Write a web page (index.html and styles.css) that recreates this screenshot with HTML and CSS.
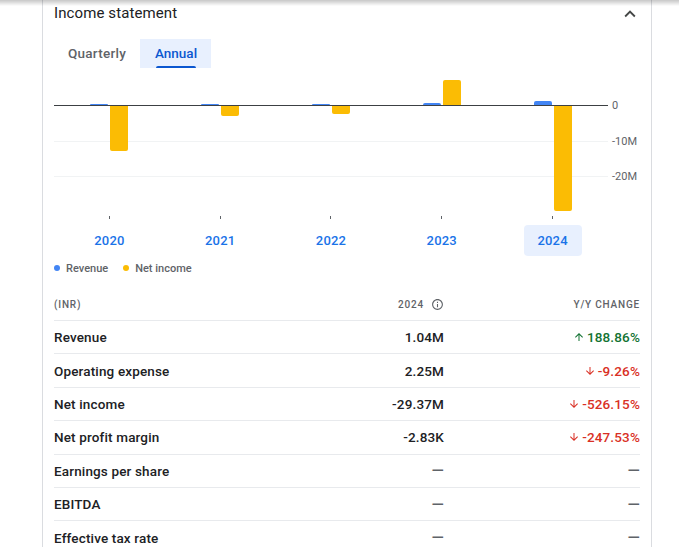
FILE: index.html
```html
<!DOCTYPE html>
<html>
<head>
<meta charset="utf-8">
<link rel="stylesheet" href="styles.css">
</head>
<body>
<div class="topshade"></div>
<section class="card">
  <header class="card-head">
    <h2 class="title">Income statement</h2>
    <svg class="chev" width="22" height="22" viewBox="0 0 24 24"><path d="M12 8l-6 6 1.41 1.41L12 10.83l4.59 4.58L18 14z" fill="#444746"/></svg>
  </header>
  <div class="tabs">
    <div class="tab">Quarterly</div>
    <div class="tab active">Annual</div>
  </div>
  <div class="chart">
    <div class="plot">
      <div class="grid-line" style="top:71px"></div>
      <div class="grid-line" style="top:106px"></div>
      <div class="zero-line" style="top:35px"></div>
      <div class="groups">
        <div class="group">
          <div class="bar rev pos" style="top:34px;height:1px"></div>
          <div class="bar ni neg" style="top:36px;height:45px"></div>
        </div>
        <div class="group">
          <div class="bar rev pos" style="top:34px;height:1px"></div>
          <div class="bar ni neg" style="top:36px;height:10px"></div>
        </div>
        <div class="group">
          <div class="bar rev pos" style="top:34px;height:1px"></div>
          <div class="bar ni neg" style="top:36px;height:8px"></div>
        </div>
        <div class="group">
          <div class="bar rev pos" style="top:33px;height:2px"></div>
          <div class="bar ni pos" style="top:10px;height:25px"></div>
        </div>
        <div class="group">
          <div class="bar rev pos" style="top:31px;height:4px"></div>
          <div class="bar ni neg" style="top:36px;height:105px"></div>
        </div>
      </div>
    </div>
    <div class="axis">
      <span class="axis-label" style="top:35px">0</span>
      <span class="axis-label" style="top:71px">-10M</span>
      <span class="axis-label" style="top:106px">-20M</span>
    </div>
  </div>
  <div class="ticks">
    <div class="tick"></div><div class="tick"></div><div class="tick"></div><div class="tick"></div><div class="tick"></div>
  </div>
  <div class="years">
    <div class="year"><span>2020</span></div>
    <div class="year"><span>2021</span></div>
    <div class="year"><span>2022</span></div>
    <div class="year"><span>2023</span></div>
    <div class="year"><span class="sel">2024</span></div>
  </div>
  <div class="legend">
    <span class="dot blue"></span><span class="legend-text">Revenue</span>
    <span class="dot yellow"></span><span class="legend-text">Net income</span>
  </div>
  <div class="table">
    <div class="row head">
      <div>(INR)</div>
      <div class="num">2024 <svg class="info" width="13" height="13" viewBox="0 0 24 24"><path d="M11 7h2v2h-2zm0 4h2v6h-2zm1-9C6.48 2 2 6.48 2 12s4.48 10 10 10 10-4.48 10-10S17.52 2 12 2zm0 18c-4.41 0-8-3.590-8-8s3.59-8 8-8 8 3.59 8 8-3.59 8-8 8z" fill="#5f6368"/></svg></div>
      <div class="num">Y/Y CHANGE</div>
    </div>
    <div class="row">
      <div>Revenue</div>
      <div class="num">1.04M</div>
      <div class="num up"><svg class="arr" width="12" height="12" viewBox="0 0 24 24"><path d="M4 12l1.41 1.41L11 7.83V20h2V7.83l5.58 5.59L20 12l-8-8-8 8z" fill="currentColor"/></svg>188.86%</div>
    </div>
    <div class="row">
      <div>Operating expense</div>
      <div class="num">2.25M</div>
      <div class="num down"><svg class="arr" width="12" height="12" viewBox="0 0 24 24"><path d="M20 12l-1.41-1.41L13 16.17V4h-2v12.17l-5.58-5.59L4 12l8 8 8-8z" fill="currentColor"/></svg>-9.26%</div>
    </div>
    <div class="row">
      <div>Net income</div>
      <div class="num">-29.37M</div>
      <div class="num down"><svg class="arr" width="12" height="12" viewBox="0 0 24 24"><path d="M20 12l-1.41-1.41L13 16.17V4h-2v12.17l-5.58-5.59L4 12l8 8 8-8z" fill="currentColor"/></svg>-526.15%</div>
    </div>
    <div class="row">
      <div>Net profit margin</div>
      <div class="num">-2.83K</div>
      <div class="num down"><svg class="arr" width="12" height="12" viewBox="0 0 24 24"><path d="M20 12l-1.41-1.41L13 16.17V4h-2v12.17l-5.58-5.59L4 12l8 8 8-8z" fill="currentColor"/></svg>-247.53%</div>
    </div>
    <div class="row">
      <div>Earnings per share</div>
      <div class="num dash">—</div>
      <div class="num dash">—</div>
    </div>
    <div class="row">
      <div>EBITDA</div>
      <div class="num dash">—</div>
      <div class="num dash">—</div>
    </div>
    <div class="row">
      <div>Effective tax rate</div>
      <div class="num dash">—</div>
      <div class="num dash">—</div>
    </div>
  </div>
</section>
</body>
</html>
```

FILE: styles.css
```css
* { box-sizing: border-box; }
html, body { margin: 0; padding: 0; background: #fff; }
body {
  font-family: Roboto, "Liberation Sans", sans-serif;
  color: #202124;
  overflow: hidden;
}
.topshade {
  position: fixed;
  top: 0; left: 0; right: 0;
  height: 6px;
  background: linear-gradient(to bottom, rgba(0,0,0,0.22), rgba(0,0,0,0));
  z-index: 5;
}
.card {
  margin-left: 42px;
  width: 610px;
  border-left: 1px solid #dadce0;
  border-right: 1px solid #dadce0;
  padding: 0 11px;
  min-height: 600px;
}
.card-head {
  display: flex;
  justify-content: space-between;
  align-items: center;
  height: 25px;
  padding-top: 1px;
}
.title {
  margin: 0;
  font-size: 15px;
  font-weight: 400;
  line-height: 24px;
  letter-spacing: 0.1px;
  color: #202124;
}
.chev { margin-right: -1px; margin-top: 1px; }
.tabs {
  display: flex;
  margin-top: 14px;
  height: 29px;
}
.tab {
  padding: 0 14px;
  height: 29px;
  line-height: 29px;
  font-size: 13.5px;
  font-weight: 500;
  letter-spacing: 0.25px;
  color: #5f6368;
  position: relative;
}
.tab.active {
  background: #e8f0fe;
  color: #0b57d0;
  padding: 0 14px 0 15px;
  letter-spacing: 0;
}
.tab.active::after {
  content: "";
  position: absolute;
  left: 16px; right: 15px; bottom: 0;
  height: 2.5px;
  border-radius: 2px 2px 0 0;
  background: #0b57d0;
}
.chart {
  display: flex;
  margin-top: 2px;
}
.plot {
  position: relative;
  width: 554px;
  height: 146px;
}
.grid-line {
  position: absolute;
  left: 0; right: 0;
  height: 1px;
  background: #f1f3f4;
}
.zero-line {
  position: absolute;
  left: 0; right: 0;
  height: 1px;
  background: #3c4043;
  z-index: 2;
}
.groups {
  position: absolute;
  inset: 0;
  display: grid;
  grid-template-columns: repeat(5, 1fr);
}
.group { position: relative; }
.bar {
  position: absolute;
  width: 18px;
}
.bar.rev { left: calc(50% - 19px); background: #4285f4; }
.bar.ni { left: calc(50% + 1px); background: #fbbc04; }
.bar.pos { border-radius: 2px 2px 0 0; }
.bar.neg { border-radius: 0 0 2px 2px; }
.axis {
  position: relative;
  flex: 1;
}
.axis-label {
  position: absolute;
  left: 4px;
  transform: translateY(-50%);
  font-size: 11px;
  line-height: 13px;
  color: #5f6368;
}
.ticks {
  display: grid;
  grid-template-columns: repeat(5, 1fr);
  width: 554px;
  height: 3px;
}
.tick {
  width: 1px;
  height: 3px;
  justify-self: center;
  background: #5f6368;
}
.years {
  display: grid;
  grid-template-columns: repeat(5, 1fr);
  width: 554px;
  margin-top: 6px;
}
.year { display: flex; justify-content: center; }
.year span {
  width: 58px;
  height: 31px;
  line-height: 31px;
  text-align: center;
  border-radius: 4px;
  font-size: 13px;
  font-weight: 500;
  letter-spacing: 0.2px;
  color: #1a73e8;
}
.year span.sel { background: #e8f0fe; }
.legend {
  display: flex;
  align-items: center;
  height: 16px;
  margin-top: 4px;
}
.dot {
  width: 6px; height: 6px;
  border-radius: 50%;
  margin-right: 6px;
}
.dot.blue { background: #4285f4; }
.dot.yellow { background: #fbbc04; margin-left: 15px; }
.legend-text {
  font-size: 11px;
  font-weight: 500;
  color: #5f6368;
}
.table { margin-top: 13px; }
.row {
  display: grid;
  grid-template-columns: 1fr 120px 196px;
  align-items: center;
  height: 33.4px;
  border-top: 1px solid #e8eaed;
  font-size: 13.5px;
  font-weight: 500;
  letter-spacing: 0.15px;
  color: #202124;
}
.row.head {
  height: 31px;
  border-top: none;
  font-size: 10px;
  letter-spacing: 0.8px;
  color: #5f6368;
}
.num {
  display: flex;
  justify-content: flex-end;
  align-items: center;
}
.info { margin-left: 7px; }
.up { color: #137333; }
.down { color: #d93025; }
.arr { margin-right: 2px; }
.dash {
  color: #5f6368;
  font-size: 16px;
  font-weight: 500;
}
```
